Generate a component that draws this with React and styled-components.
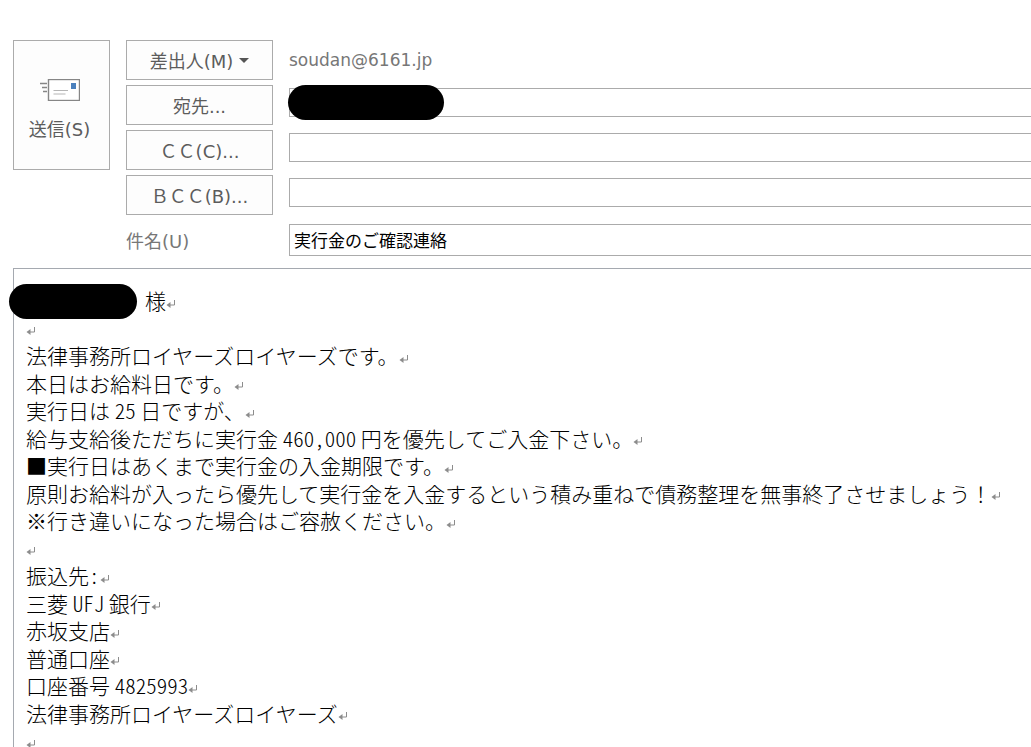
import React from "react";
import styled, { createGlobalStyle } from "styled-components";

const lines = [
  { redacted: true, text: ["様"] },
  { text: [] },
  { text: ["法律事務所ロイヤーズロイヤーズです。"] },
  { text: ["本日はお給料日です。"] },
  { text: ["実行日は ", { half: "25" }, " 日ですが、"] },
  { text: ["給与支給後ただちに実行金 ", { half: "460,000" }, " 円を優先してご入金下さい。"] },
  { text: ["■実行日はあくまで実行金の入金期限です。"] },
  { text: ["原則お給料が入ったら優先して実行金を入金するという積み重ねで債務整理を無事終了させましょう！"] },
  { text: ["※行き違いになった場合はご容赦ください。"] },
  { text: [] },
  { text: ["振込先", { half: ":" }] },
  { text: ["三菱 ", { half: "UFJ" }, " 銀行"] },
  { text: ["赤坂支店"] },
  { text: ["普通口座"] },
  { text: ["口座番号 ", { half: "4825993" }] },
  { text: ["法律事務所ロイヤーズロイヤーズ"] },
  { text: [] },
];

const SendIcon = () => (
  <svg width="40" height="22" viewBox="0 0 40 22" aria-hidden="true">
    <rect x="8.5" y="0.5" width="31" height="21" fill="#fff" stroke="#868686" strokeWidth="1.4" />
    <path d="M0 4.5h7M2 8.5h5M3 12.5h4" stroke="#868686" strokeWidth="1.6" />
    <path d="M13.5 11.5h14.5M13.5 15h12" stroke="#b5b5b5" strokeWidth="1.2" />
    <rect x="31" y="4" width="5" height="6" fill="#4a80bd" />
  </svg>
);

const ReturnMark = () => (
  <Mark width="10" height="10" viewBox="0 0 10 10" aria-hidden="true">
    <path d="M8.5 1v5H2" fill="none" stroke="#8c8c8c" />
    <path d="M4.5 3v6L0.5 6z" fill="#8c8c8c" />
  </Mark>
);

const App = () => {
  return (
    <Window>
      <GlobalStyle />
      <Header>
        <SendButton type="button">
          <SendIcon />
          送信(S)
        </SendButton>
        <Fields>
          <Row>
            <FieldButton type="button">
              差出人(M)
              <Caret />
            </FieldButton>
            <Sender>soudan@6161.jp</Sender>
          </Row>
          <Row>
            <FieldButton type="button">宛先...</FieldButton>
            <Recipient>
              <Field aria-label="宛先" />
              <RecipientMask />
            </Recipient>
          </Row>
          <Row>
            <FieldButton type="button">ＣＣ(C)...</FieldButton>
            <Recipient>
              <Field aria-label="ＣＣ" />
            </Recipient>
          </Row>
          <Row>
            <FieldButton type="button">ＢＣＣ(B)...</FieldButton>
            <Recipient>
              <Field aria-label="ＢＣＣ" />
            </Recipient>
          </Row>
          <SubjectRow>
            <Label htmlFor="subject">件名(U)</Label>
            <Field id="subject" $tall defaultValue="実行金のご確認連絡" />
          </SubjectRow>
        </Fields>
      </Header>
      <Message>
        {lines.map((line, i) => (
          <Line key={i}>
            {line.redacted && <NameMask />}
            <span>
              {line.text.map((part, j) =>
                part.half ? <Half key={j}>{part.half}</Half> : part
              )}
            </span>
            <ReturnMark />
          </Line>
        ))}
      </Message>
    </Window>
  );
};

export default App;

const GlobalStyle = createGlobalStyle`
  * {
    box-sizing: border-box;
  }
  body {
    margin: 0;
    background: #ffffff;
  }
  button, input {
    font: inherit;
  }
`;

const Window = styled.main`
  height: 100vh;
  overflow: hidden;
  padding: 40px 0 0 13px;
  display: flex;
  flex-direction: column;
  gap: 12px;
  font-family: "DejaVu Sans", "Noto Sans CJK JP", sans-serif;
  font-size: 18px;
  color: #5c5c5c;
`;

const Header = styled.header`
  display: flex;
  align-items: flex-start;
  gap: 16px;
`;

const SendButton = styled.button`
  width: 97px;
  height: 130px;
  padding: 12px 4px 0 0;
  flex-shrink: 0;
  display: flex;
  flex-direction: column;
  align-items: center;
  justify-content: center;
  gap: 16px;
  line-height: 26px;
  color: inherit;
  background: #fdfdfd;
  border: 1px solid #ababab;
`;

const Fields = styled.div`
  flex: 1;
  min-width: 0;
  display: flex;
  flex-direction: column;
  gap: 5px;
`;

const Row = styled.div`
  display: flex;
  align-items: center;
  gap: 16px;
  height: 40px;
`;

const SubjectRow = styled(Row)`
  height: 32px;
  margin-top: 4px;
`;

const FieldButton = styled.button`
  width: 147px;
  height: 40px;
  padding: 0;
  flex-shrink: 0;
  display: flex;
  align-items: center;
  justify-content: center;
  gap: 6px;
  color: inherit;
  background: #fdfdfd;
  border: 1px solid #ababab;
`;

const Caret = styled.span`
  border: 5px solid transparent;
  border-top-color: #555555;
  border-bottom: 0;
`;

const Sender = styled.span`
  font-size: 17px;
  color: #777777;
`;

const Label = styled.label`
  width: 147px;
  flex-shrink: 0;
  color: #777777;
`;

const Field = styled.input`
  flex: 1;
  width: 100%;
  min-width: 0;
  height: ${(props) => (props.$tall ? "32px" : "29px")};
  padding: 0 4px 2px;
  font-size: 17px;
  color: #000000;
  background: #ffffff;
  border: 1px solid #ababab;
  border-right: 0;
  border-radius: 0;
  outline: none;
`;

const Recipient = styled.div`
  position: relative;
  flex: 1;
  display: flex;
  padding-bottom: 6px;
`;

const Mask = styled.span`
  height: 35px;
  border-radius: 18px;
  background: #000000;
`;

const RecipientMask = styled(Mask)`
  position: absolute;
  top: -3px;
  left: -1px;
  width: 156px;
`;

const NameMask = styled(Mask)`
  width: 128px;
  margin: 0 8px 0 -17px;
  flex-shrink: 0;
`;

const Message = styled.article`
  flex: 1;
  padding: 19px 0 0 12px;
  display: grid;
  grid-auto-rows: 27px 28px;
  font-family: "Noto Sans CJK JP", sans-serif;
  font-size: 21px;
  font-weight: 300;
  color: #000000;
  border: solid #a5a9b0;
  border-width: 1px 0 0 1px;
`;

const Line = styled.div`
  display: flex;
  align-items: center;
  line-height: 24px;
  white-space: pre;

  & > span:not(:empty) {
    padding-bottom: 3px;
  }
`;

const Half = styled.span`
  font-feature-settings: "hwid";
`;

const Mark = styled.svg`
  flex-shrink: 0;
  margin-top: 4px;
`;
